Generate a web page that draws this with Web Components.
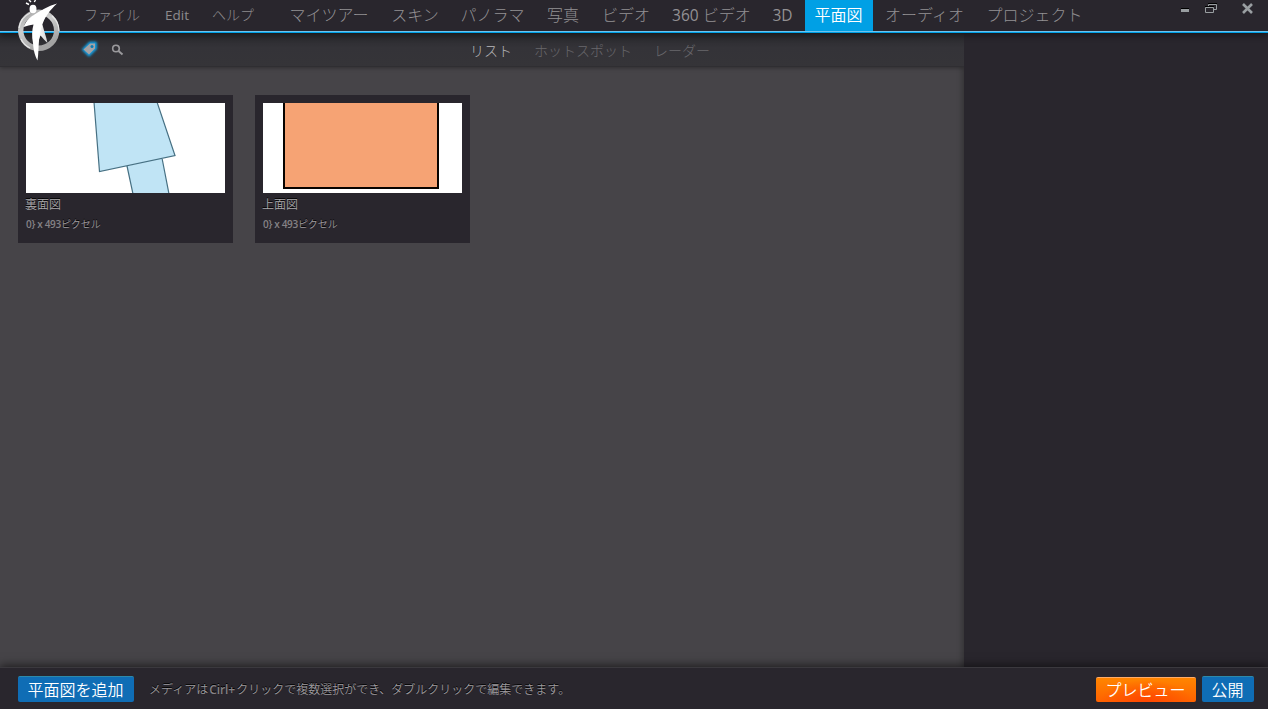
<!DOCTYPE html>
<html lang="ja"><head><meta charset="utf-8"><title>平面図</title>
<style>html,body{margin:0;height:100%;overflow:hidden;background:#29262d}body{font-family:"Open Sans","Noto Sans CJK JP",sans-serif}</style></head>
<body><tour-app></tour-app>
<script>
const define=(name,html)=>customElements.define(name,class extends HTMLElement{
  constructor(){super();this.attachShadow({mode:'open'}).innerHTML=html}
});
define('app-logo',`<style>:host{display:block;width:46px;height:62px}svg{display:block}</style>
<svg width="46" height="62" viewBox="0 0 46 62"><defs><linearGradient id="r" x1="0" y1="0" x2=".5" y2="1"><stop stop-color="#a5a5a5"/><stop offset=".45" stop-color="#cdcdcd"/><stop offset="1" stop-color="#a3a3a3"/></linearGradient><linearGradient id="l" x1="0" y1="0" x2="1" y2="0"><stop stop-color="#fff"/><stop offset="1" stop-color="#d4d4d4"/></linearGradient></defs>
<circle cx="22.700" cy="30.300" r="18" fill="none" stroke="url(#r)" stroke-width="5.400"/>
<path d="M3 28a20 20 0 0 1 11-15M5 39a19 19 0 0 0 9 9M36 16a20 20 0 0 1 7 15" fill="none" stroke="#e8e8e8" stroke-width="1.200"/>
<path d="M21 25L26.500 25C28 31 30 36 31.500 43C29 41 27 38 24.500 35.500C23 39 22 43 21 47Z" fill="url(#l)"/>
<path d="M41 3.500C32 6 24 11 17 15.500C13 17.500 11 20 7.500 27C11 26 14 25 17.500 24.500C16 30 15.500 36 17 43C17.500 51 19 56 21.500 60.500C22.500 54 22.500 47 23 40C23.500 35 24 31 26 26C28 18 34 10 41 3.500Z" fill="#fff"/>
<ellipse cx="17" cy="9" rx="3.500" ry="4.300" fill="#fff"/><path d="M10 3l3 1.500M13 0l2 2M19.500 0l-1.200 2" stroke="#fff" stroke-width="1.400"/></svg>`);
define('menu-item',`<style>:host{display:flex;align-items:center;color:#8d8b8d;font-size:14px;line-height:20px;white-space:nowrap;font-weight:300}</style><slot></slot>`);
define('nav-tab',`<style>:host{display:flex;justify-content:center;align-items:center;flex:none;height:31px;box-sizing:border-box;padding:0 1px 2px 0;color:#939194;font-size:16px;line-height:20px;white-space:pre;font-weight:300}:host([active]){background:#00a0e5;color:#fff;font-weight:350}</style><slot></slot>`);
define('window-controls',`<style>:host{display:block;height:20px;width:76px}svg{display:block}</style><svg width="76" height="20" fill="none"><path d="M3 9.500h8" stroke="#000"/><path d="M3 11.500h8" stroke="#999ea1" stroke-width="3"/><path d="M30.500 7v-1.500h8v5h-3M27.500 8.500h8v5h-8z" stroke="#999ea1"/><path d="M30 4.500h9M27 7.500h9" stroke="#000"/><path d="M65 5l9 9M74 5l-9 9" stroke="#999ea1" stroke-width="2.600"/></svg>`);
define('top-bar',`<style>:host{display:flex;height:31px;flex:none;border-bottom:2px solid #00a0e5;background:#29262d;position:relative;z-index:3;box-shadow:0 2px 7px #0007}.line{position:absolute;left:0;right:0;top:31px;height:1px;background:#6cc4ef}app-logo{position:absolute;left:16px;top:0}.m{display:grid;grid-template-columns:81px 47px 67px;padding:0 0 1px 84px}.n{display:flex;gap:2px}window-controls{margin:-1px 14px 0 auto}.e{font-weight:500;font-size:13.500px}.x{font-weight:500;font-size:15.500px}</style>
<div class="m"><menu-item>ファイル</menu-item><menu-item class="e">Edit</menu-item><menu-item>ヘルプ</menu-item></div>
<nav class="n"><nav-tab style="width:101px">マイツアー</nav-tab><nav-tab style="width:67px">スキン</nav-tab><nav-tab style="width:84px">パノラマ</nav-tab><nav-tab style="width:53px">写真</nav-tab><nav-tab style="width:69px">ビデオ</nav-tab><nav-tab style="width:98px"><span class="x">360</span> ビデオ</nav-tab><nav-tab style="width:40px"><span class="x">3D</span></nav-tab><nav-tab active style="width:68px">平面図</nav-tab><nav-tab style="width:100px">オーディオ</nav-tab><nav-tab style="width:116px">プロジェクト</nav-tab></nav><window-controls></window-controls><div class="line"></div><app-logo></app-logo>`);
define('sub-bar',`<style>:host{display:flex;align-items:center;height:33px;flex:none;background:linear-gradient(#29292d,#343338 45%,#353438);border-bottom:1px solid #2f2e32;box-shadow:0 1px 4px #0005;font-size:14px;line-height:20px;color:#69686c;font-weight:300;white-space:nowrap}svg{display:block;margin:-2px 0 0 79px;flex:none}nav{display:flex;gap:22px;margin:3px 0 0 341px}b{font-weight:300;color:#b9b8bb}</style>
<svg width="50" height="24" viewBox="79 37 50 24" fill="none"><defs><filter id="g" x="-40%" y="-40%" width="180%" height="180%"><feGaussianBlur stdDeviation=".8"/></filter></defs><path d="M83.500 49.500l6.500-6.500h5.500v5.500l-6.500 6.500z" fill="#0e9be0" stroke="#0e9be0" stroke-width="3" stroke-linejoin="round" filter="url(#g)"/><path d="M83.500 49.500l6.500-6h5v5l-6 6z" fill="#a5a3a5"/><circle cx="92" cy="46.500" r="1.500" fill="#087db8"/><circle cx="116" cy="48.500" r="3.300" stroke="#9a999c" stroke-width="1.600"/><path d="M118.500 51l4 3.500" stroke="#9a999c" stroke-width="2"/></svg><nav><b>リスト</b><span>ホットスポット</span><span>レーダー</span></nav>`);
define('plan-card',`<style>:host{display:block;width:199px;height:132px;padding:8px;background:#29262d;color:#aaa8ab;text-shadow:0 -1px #000;font-weight:350}::slotted(svg){display:block;background:#fff}.t{display:block;font-size:12px;line-height:16px;margin:4px 0 0 -1px}.s{display:block;font-size:10px;line-height:14px;margin-top:4px;color:#a09da1;white-space:nowrap}</style><slot name="picture"></slot><span class="t"><slot name="title"></slot></span><span class="s"><slot></slot></span>`);
define('media-list',`<style>:host{display:flex;align-items:flex-start;gap:22px;padding:28px 18px;flex:1}.l{font-weight:600;letter-spacing:-.32px;color:#858286;text-shadow:none}</style>
<plan-card><svg slot="picture" width="199" height="90"><path d="M68-1L73.500 68.500L149 52.500L131-1ZM101 63l6 28h36l-7-36" fill="#c0e4f5" stroke="#467083" stroke-width="1.200"/></svg><span slot="title">裏面図</span><span class="l">0} x 493</span>ピクセル</plan-card>
<plan-card><svg slot="picture" width="199" height="90"><path d="M21-2V85H175V-2Z" fill="#f6a374" stroke="#080300" stroke-width="2"/></svg><span slot="title">上面図</span><span class="l">0} x 493</span>ピクセル</plan-card>`);
define('action-button',`<style>:host{display:flex;align-items:center;justify-content:center;box-sizing:border-box;width:116px;height:26px;padding-right:1px;border-radius:2px;background:#0f6db5;border-top:1px solid #2d89aa;color:#fff;font-size:16px;line-height:20px;font-weight:350;white-space:nowrap}:host([kind=preview]){width:100px;height:25px;margin-top:1px;background:radial-gradient(ellipse at 50% 100%,#ff4600,transparent 65%),linear-gradient(#ff8500,#ff6100);border-color:#ffac69}:host([kind=publish]){width:52px}</style><slot></slot>`);
define('bottom-bar',`<style>:host{display:flex;align-items:flex-start;height:33px;flex:none;padding:8px 14px 0 18px;background:#29262d;border-top:1px solid #3b393e;position:relative;z-index:2;box-shadow:0 -2px 9px #0008}p{margin:5px 0 0 15px;font-size:12px;line-height:18px;color:#9c999d;text-shadow:0 -1px #000;font-weight:350;white-space:nowrap}i{display:inline-block;width:28px;text-indent:1px;font-style:normal;font-weight:600;line-height:12px;letter-spacing:-.1px;color:#858286}.r{display:flex;gap:6px;margin-left:auto}</style><action-button>平面図を追加</action-button><p>メディアは<i>Cirl+</i>クリックで複数選択ができ、ダブルクリックで編集できます。</p><div class="r"><action-button kind="preview">プレビュー</action-button><action-button kind="publish">公開</action-button></div>`);
define('tour-app',`<style>:host{display:flex;flex-direction:column;width:1268px;height:709px;overflow:hidden;background:#29262d}.w{display:flex;flex:1;min-height:0}main{display:flex;flex-direction:column;width:964px;background:#464448;box-shadow:inset -5px 0 6px -4px #0005}aside{flex:1;background:#29262d}</style><top-bar></top-bar><div class="w"><main><sub-bar></sub-bar><media-list></media-list></main><aside></aside></div><bottom-bar></bottom-bar>`);
</script></body></html>
